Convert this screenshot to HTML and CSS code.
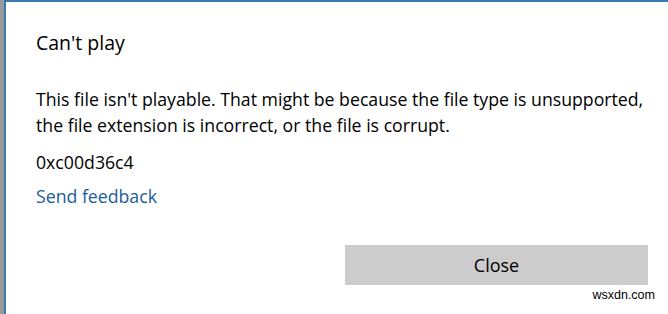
FILE: index.html
```html
<!DOCTYPE html>
<html lang="en">
<head>
    <meta charset="UTF-8">
    <meta name="viewport" content="width=device-width, initial-scale=1.0">
    <link rel="stylesheet" href="styles.css">
    <title>Can't play</title>
</head>
<body>
    <div class="window">
        <div class="dialog">
            <div class="title">Can't play</div>
            <p class="message">This file isn't playable. That might be because the file type is unsupported, the file extension is incorrect, or the file is corrupt.</p>
            <div class="code">0xc00d36c4</div>
            <a class="feedback" href="#">Send feedback</a>
            <div class="actions">
                <button class="close-button">Close</button>
            </div>
            <div class="watermark">wsxdn.com</div>
        </div>
    </div>
</body>
</html>
```

FILE: styles.css
```css
body {
    margin: 0;
    font-family: "Open Sans", Arial, sans-serif;
    background: #ffffff;
}

.window {
    height: 314px;
    border-left: 4px solid #9a9a9a;
    box-sizing: border-box;
}

.dialog {
    height: 100%;
    border-left: 2px solid #3b78b0;
    border-top: 2px solid #3b78b0;
    box-sizing: border-box;
    padding: 28px 20px 0 30px;
    display: flex;
    flex-direction: column;
}

.title {
    font-size: 19.5px;
    color: #000000;
    line-height: 26px;
}

.message {
    margin: 30px 0 0 0;
    font-size: 17.7px;
    line-height: 26px;
    color: #000000;
    width: 620px;
}

.code {
    margin-top: 11px;
    font-size: 17.7px;
    line-height: 26px;
    color: #000000;
}

.feedback {
    margin-top: 8px;
    font-size: 17.7px;
    line-height: 26px;
    color: #1a5c9a;
    text-decoration: none;
}

.actions {
    display: flex;
    justify-content: flex-end;
    margin-top: 36px;
}

.close-button {
    width: 303px;
    height: 40px;
    border: none;
    background: #cccccc;
    font-family: "Open Sans", Arial, sans-serif;
    font-size: 18px;
    color: #000000;
}

.watermark {
    align-self: flex-end;
    margin-top: 3px;
    margin-right: -7px;
    font-family: Arial, sans-serif;
    font-size: 12.5px;
    color: #000000;
}
```
